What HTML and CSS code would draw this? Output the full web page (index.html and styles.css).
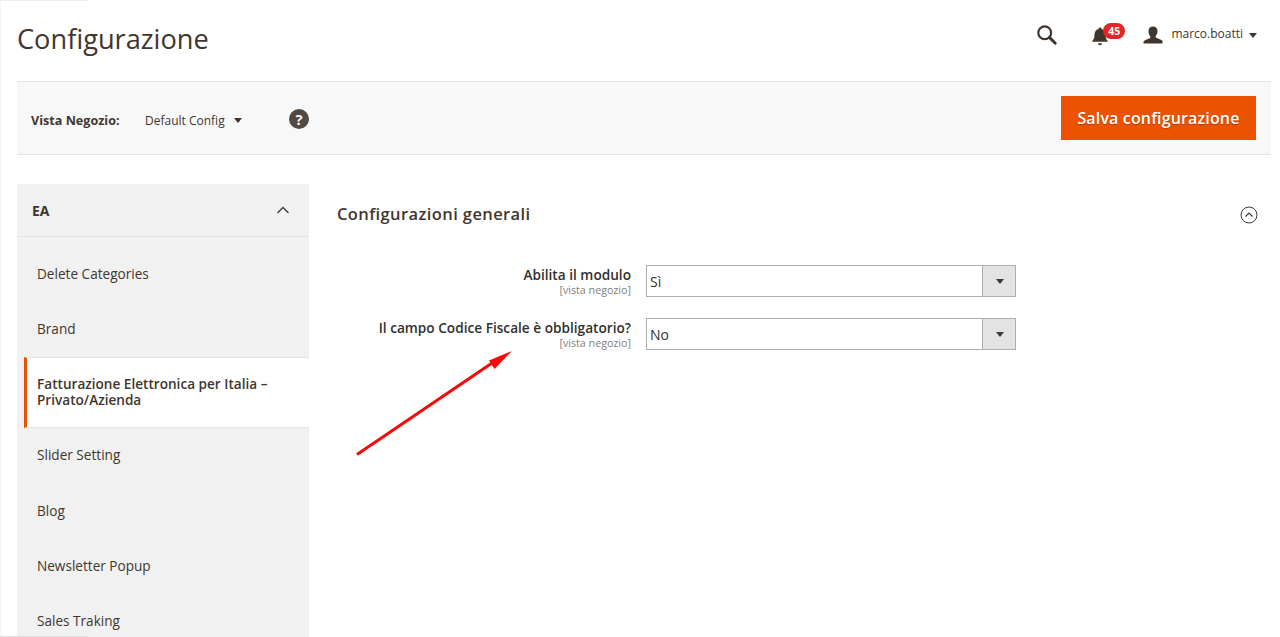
FILE: index.html
```html
<!DOCTYPE html>
<html lang="it">
<head>
<meta charset="utf-8">
<title>Configurazione</title>
<link rel="stylesheet" href="styles.css">
</head>
<body>
<div class="page">
  <header class="topbar">
    <h1 class="title">Configurazione</h1>
    <div class="actions">
      <svg class="icon-search" width="22" height="22" viewBox="0 0 24 24"><circle cx="9.500" cy="9.500" r="7" fill="none" stroke="#41362f" stroke-width="2.400"/><path d="M14.600 14.600 L21 21" stroke="#41362f" stroke-width="3.200" stroke-linecap="round"/></svg>
      <div class="bell">
        <svg width="18" height="20" viewBox="0 0 18 20"><path d="M9 1.500c.9 0 1.500.6 1.500 1.400 2.700.7 4 2.900 4 5.600 0 3.400.8 5 2.200 6.500v.8H1.300v-.8C2.700 13.500 3.500 11.900 3.500 8.500c0-2.700 1.300-4.900 4-5.600C7.500 2.100 8.100 1.500 9 1.500zM7 17.200h4c0 1.200-.9 2-2 2s-2-.8-2-2z" fill="#41362f"/></svg>
        <span class="badge">45</span>
      </div>
      <div class="user">
        <svg width="20" height="18" viewBox="0 0 20 18"><path d="M10 .5c2.900 0 4.500 2 4.500 4.800 0 2-.8 3.700-1.800 4.700v1.500c1.500 1 5.800 1.800 6.800 3.500v2.500H.5V15.500c1-1.700 5.300-2.500 6.800-3.500V10.500C6.300 9.500 5.500 7.300 5.500 5.300 5.500 2.500 7.100.5 10 .5z" fill="#41362f"/></svg>
        <span class="username">marco.boatti</span>
        <span class="caret"></span>
      </div>
    </div>
  </header>

  <div class="storebar">
    <div class="scope">
      <span class="scope-label">Vista Negozio:</span>
      <span class="scope-value">Default Config</span>
      <span class="caret caret-scope"></span>
      <span class="help">?</span>
    </div>
    <button class="save" type="button">Salva configurazione</button>
  </div>

  <div class="columns">
    <nav class="sidebar">
      <div class="side-head">
        <span>EA</span>
        <svg width="14" height="8" viewBox="0 0 14 8"><path d="M1.500 7 L7 1.500 L12.500 7" fill="none" stroke="#41362f" stroke-width="1.300"/></svg>
      </div>
      <ul class="side-list">
        <li class="side-item">Delete Categories</li>
        <li class="side-item">Brand</li>
        <li class="side-item active">Fatturazione Elettronica per Italia – Privato/Azienda</li>
        <li class="side-item">Slider Setting</li>
        <li class="side-item">Blog</li>
        <li class="side-item">Newsletter Popup</li>
        <li class="side-item">Sales Traking</li>
      </ul>
    </nav>

    <main class="content">
      <div class="section-head">
        <h2 class="section-title">Configurazioni generali</h2>
        <svg class="collapse" width="18" height="18" viewBox="0 0 18 18"><circle cx="9" cy="9" r="8" fill="none" stroke="#41362f" stroke-width="1"/><path d="M5.500 10.500 L9 7 L12.500 10.500" fill="none" stroke="#41362f" stroke-width="1.200"/></svg>
      </div>
      <div class="form">
        <div class="row">
          <div class="label"><strong>Abilita il modulo</strong><small>[vista negozio]</small></div>
          <div class="select"><span class="select-value">Sì</span><span class="select-btn"><span class="caret"></span></span></div>
        </div>
        <div class="row">
          <div class="label"><strong>Il campo Codice Fiscale è obbligatorio?</strong><small>[vista negozio]</small></div>
          <div class="select"><span class="select-value">No</span><span class="select-btn"><span class="caret"></span></span></div>
        </div>
      </div>
    </main>
  </div>
</div>
<svg class="arrow" width="170" height="120" viewBox="350 345 170 120"><path d="M357 454.500 L495 361" stroke="#f50a0a" stroke-width="3" fill="none"/><path d="M512 351 L489 360.500 L494.500 369 Z" fill="#f50a0a"/></svg>
</body>
</html>
```

FILE: styles.css
```css
* { box-sizing: border-box; }
html, body { margin: 0; height: 637px; overflow: hidden; background: #fff; }
body { font-family: "Open Sans", "Noto Sans", sans-serif; color: #41362f; position: relative; }
body::before { content: ""; position: absolute; left: 0; top: 0; width: 88px; height: 1px; background: #eeeeee; }
body::after { content: ""; position: absolute; left: 0; bottom: 0; width: 88px; height: 1px; background: #dddddd; }
.page { width: 1271px; padding-left: 16px; border-left: 1px solid #f4f4f4; }

.topbar { height: 81px; display: flex; justify-content: space-between; align-items: flex-start; padding-right: 14px; }
.title { margin: 0; padding-top: 19px; font-size: 27.200px; line-height: 40px; font-weight: 400; color: #41362f; }
.actions { display: flex; align-items: center; height: 24px; margin-top: 23px; }
.icon-search { margin-right: 33px; }
.bell { position: relative; width: 18px; height: 20px; margin-right: 34px; margin-top: 2px; }
.bell svg { display: block; }
.badge { position: absolute; left: 12px; top: -3px; width: 22px; height: 16px; border-radius: 8px; background: #e22626; color: #fff; font-size: 10.500px; line-height: 16px; font-weight: 700; text-align: center; }
.user { display: flex; align-items: center; }
.username { font-size: 12px; margin-left: 8px; margin-right: 6px; line-height: 20px; position: relative; top: -1px; }
.caret { display: inline-block; width: 0; height: 0; border-left: 4px solid transparent; border-right: 4px solid transparent; border-top: 5px solid #41362f; }

.storebar { height: 74px; background: #f8f8f8; border-top: 1px solid #e3e3e3; border-bottom: 1px solid #e3e3e3; display: flex; justify-content: space-between; align-items: center; padding: 0 15px 0 14px; }
.scope { display: flex; align-items: center; padding-top: 4px; }
.scope-label { font-size: 12.600px; font-weight: 700; width: 114px; }
.scope-value { font-size: 12px; width: 89px; }
.caret-scope { margin-right: 47px; }
.help { width: 20px; height: 20px; border-radius: 50%; background: #514943; color: #f8f8f8; font-size: 15px; line-height: 20px; font-weight: 700; text-align: center; position: relative; top: -1px; }
.save { width: 195px; height: 44px; border: 0; background: #eb5202; color: #fff; font: 600 16px/44px "Open Sans", sans-serif; letter-spacing: .15px; padding: 0; text-shadow: 0 1px 1px rgba(0,0,0,.25); }

.columns { display: flex; margin-top: 29px; }
.sidebar { width: 292px; height: 453px; background: #f1f1f1; flex: none; }
.side-head { height: 53px; padding: 0 19px 0 15px; display: flex; justify-content: space-between; align-items: center; border-bottom: 1px solid #e3e3e3; font-size: 14px; font-weight: 700; }
.side-list { list-style: none; margin: 0; padding: 9px 0 0; }
.side-item { height: 55.300px; display: flex; align-items: center; padding: 0 20px; font-size: 13.600px; line-height: 16px; color: #41362f; }
.side-item.active { height: 71px; margin-left: 7px; padding-left: 10px; padding-right: 30px; background: #fff; border-left: 3px solid #eb5202; font-weight: 600; border-top: 1px solid #e3e3e3; border-bottom: 1px solid #e3e3e3; }

.content { flex: 1; padding: 0 13px 0 28px; }
.section-head { height: 60px; display: flex; justify-content: space-between; align-items: center; }
.section-title { margin: 0; font-size: 16.500px; line-height: 22px; font-weight: 600; letter-spacing: .4px; color: #41362f; }
.collapse { position: relative; top: 1px; }
.form { padding-top: 21px; }
.row { display: flex; height: 32px; margin-bottom: 21px; }
.label { width: 294px; text-align: right; display: flex; flex-direction: column; }
.label strong { font-size: 13.650px; line-height: 16px; font-weight: 600; color: #303030; margin-top: 1.500px; }
.label small { font-size: 10.700px; line-height: 12px; color: #808080; margin-top: 1.500px; }
.select { width: 370px; height: 32px; margin-left: 15px; border: 1px solid #adadad; display: flex; background: #fff; }
.select-value { flex: 1; font-size: 14px; line-height: 31px; padding-left: 3px; color: #303030; }
.select-btn { width: 33px; padding-left: 2px; background: #e3e3e3; border-left: 1px solid #adadad; display: flex; align-items: center; justify-content: center; }

.arrow { position: absolute; left: 350px; top: 345px; }
```
